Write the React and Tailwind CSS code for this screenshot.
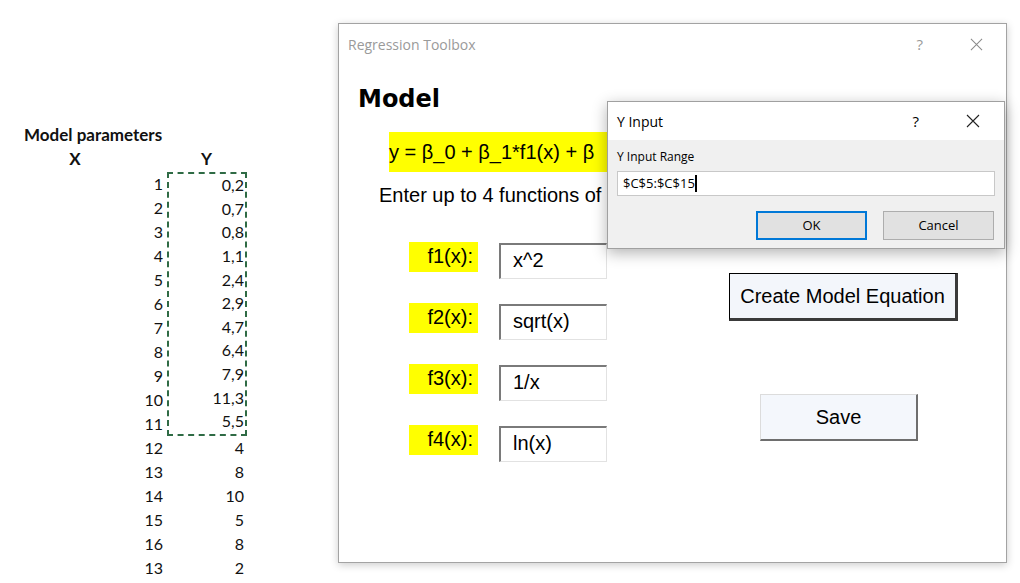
import React from "react"

const sheetRows = [
  ["1", "0,2"], ["2", "0,7"], ["3", "0,8"], ["4", "1,1"], ["5", "2,4"], ["6", "2,9"],
  ["7", "4,7"], ["8", "6,4"], ["9", "7,9"], ["10", "11,3"], ["11", "5,5"],
]
const moreRows = [["12", "4"], ["13", "8"], ["14", "10"], ["15", "5"], ["16", "8"], ["13", "2"]]

const funcs = [
  ["f1(x):", "x^2"],
  ["f2(x):", "sqrt(x)"],
  ["f3(x):", "1/x"],
  ["f4(x):", "ln(x)"],
]

const CloseX = ({ size = 14, color = "#888" }) => (
  <svg width={size} height={size} viewBox="0 0 14 14">
    <path d="M1 1 L13 13 M13 1 L1 13" stroke={color} strokeWidth="1.1" fill="none" />
  </svg>
)

const Sheet = () => (
  <div className="w-[338px] shrink-0 pt-[124px] font-['Lato','Liberation_Sans',sans-serif] text-[16px] text-[#111]">
    <div className="h-[22px] pl-[24px] text-[17px] font-bold leading-[22px]">Model parameters</div>
    <div className="flex h-[26px] items-center text-[17px] font-bold">
      <div className="ml-[24px] w-[102px] text-center">X</div>
      <div className="ml-[41px] w-[79px] text-center">Y</div>
    </div>
    <div className="flex">
      <div className="w-[167px]">
        {[...sheetRows, ...moreRows].map(([n], i) => (
          <div key={i} className="h-[24px] pr-[4px] text-right leading-[24px]">{n}</div>
        ))}
      </div>
      <div className="w-[80px]">
        <div className="border-2 border-dashed border-[#2f6b45]">
          {sheetRows.map(([, v], i) => (
            <div key={i} className="h-[23.64px] pr-[1px] text-right leading-[22px]">{v}</div>
          ))}
        </div>
        {moreRows.map(([, v], i) => (
          <div key={i} className="h-[24px] pr-[3px] text-right leading-[24px]">{v}</div>
        ))}
      </div>
    </div>
  </div>
)

const FuncRow = ({ label, value }) => (
  <div className="flex items-start">
    <div className="h-[30px] w-[69px] bg-[#ffff00] pr-[5px] text-right leading-[28px]">{label}</div>
    <div className="ml-[21px] mt-[1px] h-[36px] w-[108px] border-l-2 border-t-2 border-b border-r border-l-[#7a7a7a] border-t-[#7a7a7a] border-b-[#e2e2e2] border-r-[#e2e2e2] pl-[12px] leading-[30px]">
      {value}
    </div>
  </div>
)

const MainDialog = () => (
  <div className="mt-[23px] h-[540px] w-[669px] shrink-0 border border-[#a3a3a3] bg-white shadow-[0_2px_8px_rgba(0,0,0,0.2)]">
    <div className="flex h-[40px] items-center pl-[9px] font-['Open_Sans','Noto_Sans',sans-serif] text-[14px] text-[#9a9a9a]">
      <span>Regression Toolbox</span>
      <span className="ml-auto mr-[47px] text-[15px]">?</span>
      <span className="mr-[23px]"><CloseX size={13} color="#8a8a8a" /></span>
    </div>
    <div className="font-['Liberation_Sans',sans-serif] text-[20px] text-black">
      <div className="ml-[19px] mt-[20px] h-[30px] font-['DejaVu_Sans',sans-serif] text-[24px] font-bold leading-[30px]">Model</div>
      <div className="ml-[50px] mt-[18px] h-[40px] w-[226px] bg-[#ffff00] leading-[40px] whitespace-nowrap">
        y = β_0 + β_1*f1(x) + β
      </div>
      <div className="ml-[40px] mt-[11px] h-[24px] leading-[24px]">Enter up to 4 functions of</div>
      <div className="mt-[35px] flex">
        <div className="ml-[70px] flex flex-col gap-[24px]">
          {funcs.map(([l, v]) => (
            <FuncRow key={l} label={l} value={v} />
          ))}
        </div>
        <div className="ml-[122px] flex flex-col items-start">
          <div className="mt-[31px] h-[48px] w-[229px] border border-black border-b-[3px] border-r-[3px] border-b-[#3a3a3a] border-r-[#3a3a3a] bg-[#f3f6fb] text-center leading-[44px]">
            Create Model Equation
          </div>
          <div className="ml-[31px] mt-[73px] h-[47px] w-[158px] border border-[#dcdcdc] border-b-2 border-r-2 border-b-[#6e6e6e] border-r-[#6e6e6e] bg-[#f4f7fc] text-center leading-[44px]">
            Save
          </div>
        </div>
      </div>
    </div>
  </div>
)

const YInputDialog = () => (
  <div className="absolute left-[607px] top-[101px] h-[148px] w-[398px] border border-[#a0a0a0] bg-[#f0f0f0] font-['Open_Sans','Noto_Sans',sans-serif] text-black shadow-[0_4px_14px_rgba(0,0,0,0.3)]">
    <div className="flex h-[38px] items-center bg-white pl-[9px] text-[14px]">
      <span>Y Input</span>
      <span className="ml-auto mr-[47px] text-[15px]">?</span>
      <span className="mr-[24px]"><CloseX size={14} color="#222" /></span>
    </div>
    <div className="px-[9px]">
      <div className="mt-[8px] h-[18px] text-[12px] leading-[18px]">Y Input Range</div>
      <div className="mt-[5px] flex h-[25px] w-[378px] items-center border border-[#c8c8c8] bg-white pl-[5px] text-[13px]">
        <span>$C$5:$C$15</span>
        <span className="h-[17px] w-[2px] bg-black" />
      </div>
      <div className="mt-[15px] flex justify-end gap-[16px] pr-[1px] text-[13px]">
        <div className="h-[29px] w-[111px] border-2 border-[#0078d7] bg-[#e1e1e1] text-center leading-[25px]">OK</div>
        <div className="h-[29px] w-[111px] border border-[#adadad] bg-[#e1e1e1] text-center leading-[27px]">Cancel</div>
      </div>
    </div>
  </div>
)

export default function App() {
  return (
    <div className="relative flex h-[583px] w-[1020px] overflow-hidden bg-white">
      <Sheet />
      <MainDialog />
      <YInputDialog />
    </div>
  )
}
